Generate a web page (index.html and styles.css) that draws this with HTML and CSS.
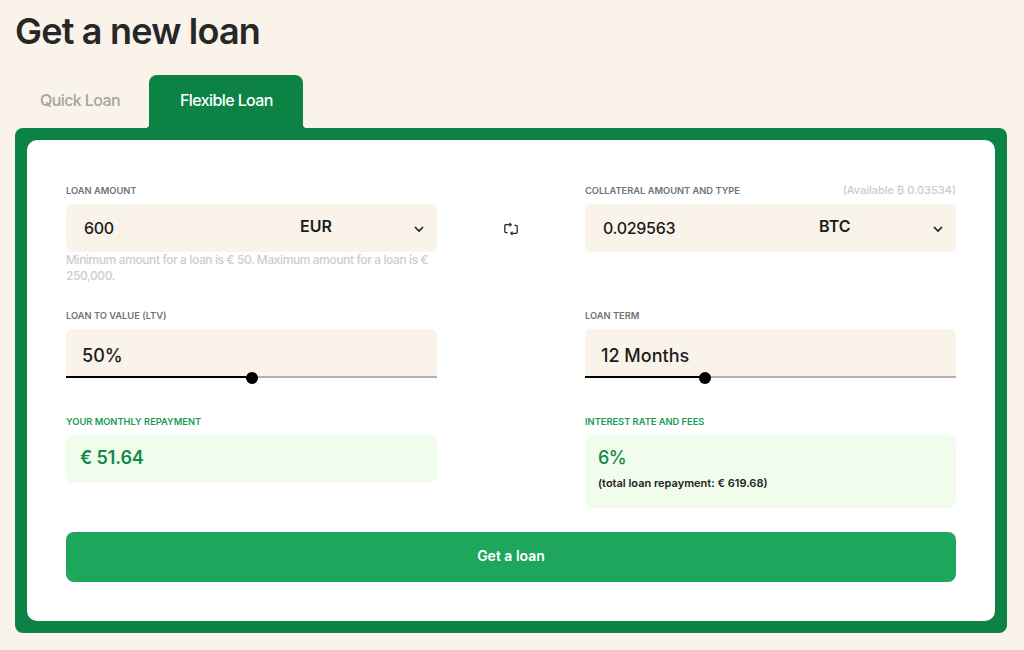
FILE: index.html
```html
<!DOCTYPE html>
<html lang="en">
<head>
    <meta charset="UTF-8">
    <title>Get a new loan</title>
    <link rel="stylesheet" href="styles.css">
</head>
<body>
    <div class="page">
        <h1>Get a new loan</h1>

        <div class="tabs">
            <div class="tab tab-quick">Quick Loan</div>
            <div class="tab tab-active">Flexible Loan</div>
        </div>

        <div class="panel">
            <form class="card">
                <div class="grid">
                    <div class="cell">
                        <div class="label-row"><span class="label">Loan amount</span></div>
                        <div class="field">
                            <span class="field-value">600</span>
                            <span class="field-select">EUR</span>
                            <svg class="chevron" viewBox="0 0 12 12"><path d="M2 4l4 4 4-4"/></svg>
                        </div>
                        <p class="hint">Minimum amount for a loan is € 50. Maximum amount for a loan is € 250,000.</p>
                    </div>

                    <div class="swap">
                        <svg viewBox="0 0 14 14">
                            <path d="M6 2.7H1.8a1 1 0 0 0-1 1V9.6a1 1 0 0 0 1 1H3.6"/>
                            <path d="M8 11.3h4.2a1 1 0 0 0 1-1V4.4a1 1 0 0 0-1-1H10.4"/>
                            <path d="M5.5 1L7.2 2.7L5.5 4.4"/>
                            <path d="M8.5 9.6L6.8 11.3L8.5 13"/>
                        </svg>
                    </div>

                    <div class="cell">
                        <div class="label-row">
                            <span class="label">Collateral amount and type</span>
                            <span class="available">(Available ₿ 0.03534)</span>
                        </div>
                        <div class="field">
                            <span class="field-value">0.029563</span>
                            <span class="field-select">BTC</span>
                            <svg class="chevron" viewBox="0 0 12 12"><path d="M2 4l4 4 4-4"/></svg>
                        </div>
                    </div>

                    <div class="cell">
                        <div class="label-row"><span class="label">Loan to value (LTV)</span></div>
                        <div class="slider-field">
                            <span class="slider-value">50%</span>
                            <div class="track">
                                <div class="track-fill" style="width: 50%"></div>
                            </div>
                        </div>
                    </div>

                    <div></div>

                    <div class="cell">
                        <div class="label-row"><span class="label">Loan term</span></div>
                        <div class="slider-field">
                            <span class="slider-value">12 Months</span>
                            <div class="track">
                                <div class="track-fill" style="width: 32.3%"></div>
                            </div>
                        </div>
                    </div>

                    <div class="cell">
                        <div class="label-row"><span class="label label-green">Your monthly repayment</span></div>
                        <div class="result result-amount">€ 51.64</div>
                    </div>

                    <div></div>

                    <div class="cell">
                        <div class="label-row"><span class="label label-green">Interest rate and fees</span></div>
                        <div class="result result-rate">
                            <div class="rate">6%</div>
                            <div class="total">(total loan repayment: € 619.68)</div>
                        </div>
                    </div>
                </div>

                <button type="button" class="submit">Get a loan</button>
            </form>
        </div>
    </div>
</body>
</html>
```

FILE: styles.css
```css
:root {
    --background-color: #f9f3ea;
    --panel-green: #0c8345;
    --text-green: #108a4a;
    --label-green: #1a9a55;
    --button-green: #1ea65c;
    --light-green: #f0fcec;
    --text-color: #1c1c1c;
}

* {
    margin: 0;
    padding: 0;
    box-sizing: border-box;
}

body {
    font-family: Inter, 'Liberation Sans', sans-serif;
    background-color: var(--background-color);
    color: var(--text-color);
}

.page {
    padding: 9px 17px 17px 15px;
}

h1 {
    font-size: 36px;
    line-height: 44px;
    font-weight: 600;
    letter-spacing: -0.8px;
    color: #272727;
}

.tabs {
    display: flex;
    margin-top: 22px;
}

.tab {
    position: relative;
    height: 53px;
    padding-top: 15px;
    font-size: 16px;
    line-height: 20px;
    font-weight: 500;
    letter-spacing: -0.6px;
}

.tab-quick {
    width: 134px;
    padding-left: 25px;
    color: #a8a4a0;
}

.tab-active {
    width: 154px;
    padding-left: 31px;
    color: #fff;
    background-color: var(--panel-green);
    border-radius: 8px 8px 0 0;
}

/* small fillets where the tab meets the panel */
.tab-active::before,
.tab-active::after {
    content: "";
    position: absolute;
    bottom: 0;
    width: 4px;
    height: 4px;
}

.tab-active::before {
    left: -4px;
    background: radial-gradient(circle at 0 0, transparent 4px, var(--panel-green) 4.5px);
}

.tab-active::after {
    right: -4px;
    background: radial-gradient(circle at 100% 0, transparent 4px, var(--panel-green) 4.5px);
}

.panel {
    padding: 12px;
    background-color: var(--panel-green);
    border-radius: 8px;
}

.card {
    padding: 44px 39px 39px;
    background-color: #fff;
    border-radius: 10px;
}

.grid {
    display: grid;
    grid-template-columns: 371px 148px 371px;
    row-gap: 25px;
}

.label-row {
    display: flex;
    justify-content: space-between;
    align-items: center;
    height: 12px;
    margin-bottom: 8px;
}

.label {
    font-size: 9.3px;
    font-weight: 600;
    text-transform: uppercase;
    color: #71717a;
}

.label-green {
    color: var(--label-green);
}

.available {
    font-size: 11px;
    font-weight: 500;
    color: #cbcbcb;
}

.field {
    display: flex;
    align-items: center;
    height: 48px;
    padding-left: 18px;
    background-color: var(--background-color);
    border-radius: 6px;
}

.field-value {
    width: 216px;
    font-size: 16px;
    font-weight: 500;
    letter-spacing: -0.3px;
}

.field-select {
    width: 113px;
    padding-bottom: 4px;
    font-size: 16px;
    font-weight: 600;
}

.chevron {
    width: 12px;
    height: 12px;
    margin-top: 1px;
    fill: none;
    stroke: #1c1c1c;
    stroke-width: 1.6;
}

.hint {
    font-size: 12px;
    line-height: 16px;
    font-weight: 500;
    letter-spacing: -0.4px;
    color: #cdcdcd;
}

.swap {
    display: flex;
    justify-content: center;
    padding-top: 38px;
}

.swap svg {
    width: 14px;
    height: 14px;
    fill: none;
    stroke: #2a2a2a;
    stroke-width: 1.3;
}

.slider-field {
    position: relative;
    height: 49px;
    margin-bottom: 12px;
    padding: 16px 0 0 16px;
    background-color: var(--background-color);
    border-radius: 6px 6px 0 0;
}

.slider-value {
    font-size: 18px;
    line-height: 22px;
    font-weight: 500;
}

.track {
    position: absolute;
    left: 0;
    right: 0;
    bottom: 0;
    height: 2px;
    background-color: #b5b0ab;
}

.track-fill {
    position: relative;
    height: 100%;
    background-color: #000;
}

.track-fill::after {
    content: "";
    position: absolute;
    right: -6px;
    top: -4px;
    width: 12px;
    height: 12px;
    background-color: #000;
    border-radius: 50%;
}

.result {
    background-color: var(--light-green);
    border-radius: 8px;
    padding-left: 14px;
}

.result-amount {
    height: 48px;
    font-size: 18px;
    line-height: 45px;
    font-weight: 600;
    letter-spacing: -0.1px;
    color: var(--text-green);
}

.result-rate {
    height: 73px;
    padding-left: 13px;
    padding-top: 11px;
}

.rate {
    font-size: 18px;
    line-height: 24px;
    font-weight: 500;
    letter-spacing: -0.5px;
    color: var(--text-green);
}

.total {
    margin-top: 6px;
    font-size: 11px;
    line-height: 14px;
    font-weight: 600;
    color: #222;
}

.submit {
    display: block;
    width: 100%;
    height: 50px;
    margin-top: 24px;
    padding-bottom: 3px;
    font-family: inherit;
    font-size: 14px;
    font-weight: 600;
    color: #fff;
    background-color: var(--button-green);
    border: none;
    border-radius: 8px;
}
```
